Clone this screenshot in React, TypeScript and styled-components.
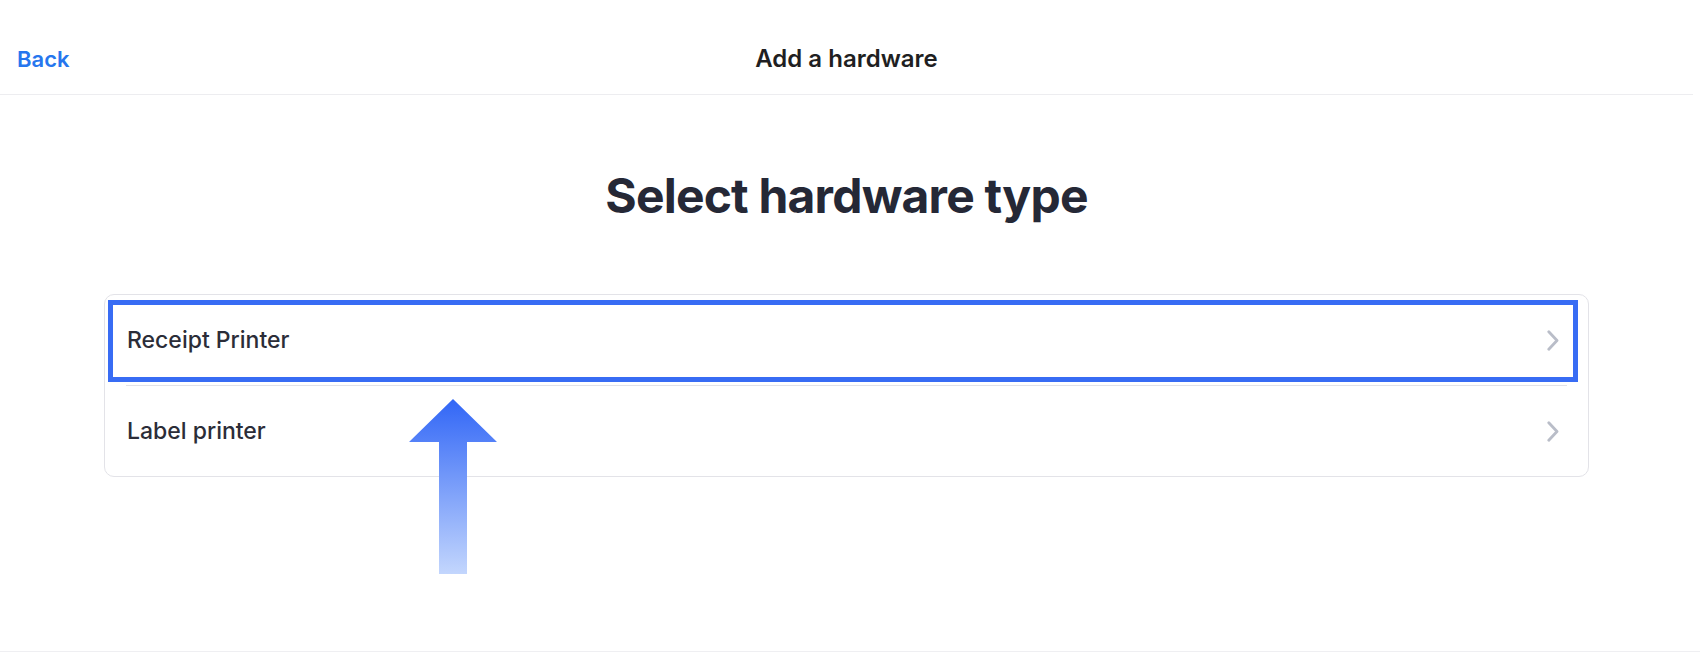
import React from 'react';
import styled, { createGlobalStyle } from 'styled-components';

const GlobalStyle = createGlobalStyle`
  html, body {
    margin: 0;
    padding: 0;
    background: #ffffff;
  }
  body {
    font-family: Inter, "Noto Sans", "Liberation Sans", sans-serif;
    -webkit-font-smoothing: antialiased;
  }
`;

const Screen = styled.div`
  width: 1700px;
  height: 652px;
  box-sizing: border-box;
  padding-right: 7px;
  border-bottom: 1px solid #efeff2;
  background: #ffffff;
  overflow: hidden;
`;

const Header = styled.header`
  height: 95px;
  box-sizing: border-box;
  padding: 45px 17px 0;
  border-bottom: 1px solid #ededf0;
  display: grid;
  grid-template-columns: 1fr auto 1fr;
  align-items: start;
`;

const BackLink = styled.button`
  justify-self: start;
  background: none;
  border: none;
  padding: 0;
  font-family: inherit;
  font-size: 22px;
  line-height: 28px;
  font-weight: 600;
  color: #2676ee;
  cursor: pointer;
`;

const Title = styled.div`
  font-size: 24px;
  line-height: 28px;
  font-weight: 600;
  color: #1f1f22;
`;

const Content = styled.main`
  display: flex;
  flex-direction: column;
  align-items: center;
  padding: 0 104px;
`;

const Heading = styled.h1`
  margin: 72px 0 69px;
  font-size: 48px;
  line-height: 58px;
  font-weight: 700;
  letter-spacing: -0.8px;
  color: #252836;
`;

const Card = styled.div`
  position: relative;
  align-self: stretch;
  border: 1px solid #e3e3e8;
  border-radius: 10px;
  background: #ffffff;
`;

const Row = styled.div<{ $divider?: boolean }>`
  position: relative;
  height: 90px;
  display: flex;
  align-items: center;
  justify-content: space-between;
  padding: 0 29px 0 22px;
  box-sizing: border-box;
  ${(p) =>
    p.$divider &&
    `
    &::after {
      content: '';
      position: absolute;
      left: 21px;
      right: 21px;
      bottom: -1px;
      height: 1px;
      background: #e2e2e7;
    }
    margin-bottom: 1px;
  `}
`;

const RowLabel = styled.span`
  font-size: 23px;
  font-weight: 500;
  color: #2b2d38;
`;

const Highlight = styled.div`
  position: absolute;
  top: 5px;
  left: 3px;
  right: 10px;
  bottom: 3px;
  border: 5px solid #386cf4;
  pointer-events: none;
`;

const ArrowMark = styled.svg`
  position: absolute;
  left: 303px;
  top: 104px;
  pointer-events: none;
`;

const Chevron = () => (
  <svg width="12" height="21" viewBox="0 0 12 21">
    <polyline
      points="1.8,1.8 10,10.5 1.8,19.2"
      fill="none"
      stroke="#b9bdc8"
      strokeWidth="2.8"
      strokeLinecap="round"
      strokeLinejoin="round"
    />
  </svg>
);

const items = ['Receipt Printer', 'Label printer'];

export default function App() {
  return (
    <>
      <GlobalStyle />
      <Screen>
        <Header>
          <BackLink>Back</BackLink>
          <Title>Add a hardware</Title>
          <span />
        </Header>
        <Content>
          <Heading>Select hardware type</Heading>
          <Card>
            {items.map((label, i) => (
              <Row key={label} $divider={i < items.length - 1}>
                <RowLabel>{label}</RowLabel>
                <Chevron />
                {i === 0 && <Highlight />}
              </Row>
            ))}
            {/* annotation arrow pointing at the first row */}
            <ArrowMark width="90" height="176" viewBox="0 0 90 176">
              <defs>
                <linearGradient id="arrowFill" x1="0" y1="0" x2="0" y2="1">
                  <stop offset="0" stopColor="#3166f6" />
                  <stop offset="1" stopColor="#c3d6fd" />
                </linearGradient>
              </defs>
              <polygon
                points="45,0 89,43 59,43 59,175 31,175 31,43 1,43"
                fill="url(#arrowFill)"
              />
            </ArrowMark>
          </Card>
        </Content>
      </Screen>
    </>
  );
}
